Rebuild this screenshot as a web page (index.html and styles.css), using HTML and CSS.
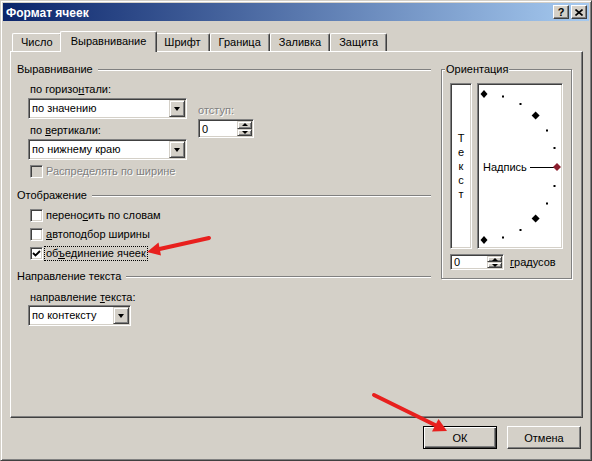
FILE: index.html
```html
<!DOCTYPE html>
<html lang="ru">
<head>
    <meta charset="UTF-8">
    <title>Формат ячеек</title>
    <link rel="stylesheet" href="styles.css">
</head>
<body>
    <div class="window">
        <div class="titlebar">
            <span class="title">Формат ячеек</span>
            <div class="caption-buttons">
                <span class="cap-btn">?</span>
                <span class="cap-btn">
                    <svg width="8" height="7" viewBox="0 0 8 7">
                        <path d="M0.5 0.5 L7.5 6.5 M7.5 0.5 L0.5 6.5" stroke="#000" stroke-width="1.6"/>
                    </svg>
                </span>
            </div>
        </div>

        <div class="content">
            <div class="tabs">
                <div class="tab">Число</div>
                <div class="tab active">Выравнивание</div>
                <div class="tab">Шрифт</div>
                <div class="tab">Граница</div>
                <div class="tab">Заливка</div>
                <div class="tab">Защита</div>
            </div>

            <div class="tab-panel">
                <div class="left-col">
                    <div class="group-title">Выравнивание</div>
                    <div class="group-body">
                        <div class="align-fields">
                            <div class="align-main">
                                <div class="field-label first">по горизо<u>н</u>тали:</div>
                                <div class="select">
                                    <span class="select-value">по значению</span>
                                    <span class="drop-btn"></span>
                                </div>
                                <div class="field-label">по <u>в</u>ертикали:</div>
                                <div class="select">
                                    <span class="select-value">по нижнему краю</span>
                                    <span class="drop-btn"></span>
                                </div>
                            </div>
                            <div class="indent">
                                <div class="field-label disabled">отступ:</div>
                                <div class="spin spin-indent">
                                    <span class="spin-value">0</span>
                                    <span class="spin-arrows">
                                        <span class="spin-btn up"></span>
                                        <span class="spin-btn down"></span>
                                    </span>
                                </div>
                            </div>
                        </div>
                        <div class="check-row disabled">
                            <span class="check-box"></span>
                            <span class="check-text">Распределять по ширине</span>
                        </div>
                    </div>

                    <div class="group-title display-title">Отображение</div>
                    <div class="group-body">
                        <div class="check-row">
                            <span class="check-box"></span>
                            <span class="check-text">перено<u>с</u>ить по словам</span>
                        </div>
                        <div class="check-row">
                            <span class="check-box"></span>
                            <span class="check-text"><u>а</u>втоподбор ширины</span>
                        </div>
                        <div class="check-row">
                            <span class="check-box">
                                <svg width="9" height="9" viewBox="0 0 9 9">
                                    <path d="M1 4 L3.5 6.5 L8 2" stroke="#000" stroke-width="1.8" fill="none"/>
                                </svg>
                            </span>
                            <span class="check-text focused">об<u>ъ</u>единение ячеек</span>
                        </div>
                    </div>

                    <div class="group-title direction-title">Направление текста</div>
                    <div class="group-body">
                        <div class="field-label direction-label">направление <u>т</u>екста:</div>
                        <div class="select select-short">
                            <span class="select-value">по контексту</span>
                            <span class="drop-btn"></span>
                        </div>
                    </div>
                </div>

                <fieldset class="orientation">
                    <legend>Ориентация</legend>
                    <div class="orient-boxes">
                        <div class="vertical-text">
                            <span>Т</span><span>е</span><span>к</span><span>с</span><span>т</span>
                        </div>
                        <div class="dial">
                            <svg width="82" height="162" viewBox="0 0 82 162">
                                <g fill="#000">
                                    <polygon points="4,4 7.5,8 4,12 0.5,8"/>
                                    <rect x="22" y="9.5" width="2" height="2"/>
                                    <rect x="39.5" y="17" width="2" height="2"/>
                                    <polygon points="55.6,25.4 59.6,29.4 55.6,33.4 51.6,29.4"/>
                                    <rect x="66" y="43.5" width="2" height="2"/>
                                    <rect x="73.5" y="61" width="2" height="2"/>
                                    <rect x="73.5" y="99" width="2" height="2"/>
                                    <rect x="66" y="116.5" width="2" height="2"/>
                                    <polygon points="55.6,128.6 59.6,132.6 55.6,136.6 51.6,132.6"/>
                                    <rect x="39.5" y="143" width="2" height="2"/>
                                    <rect x="22" y="150.5" width="2" height="2"/>
                                    <polygon points="4,150 7.5,154 4,158 0.5,154"/>
                                </g>
                                <text x="3" y="85" class="dial-label">Надпись</text>
                                <line x1="50" y1="81.5" x2="75" y2="81.5" stroke="#000" stroke-width="1"/>
                                <polygon points="77,77 81,81 77,85 73,81" fill="#8b1e2e"/>
                            </svg>
                        </div>
                    </div>
                    <div class="degrees-row">
                        <div class="spin spin-degrees">
                            <span class="spin-value">0</span>
                            <span class="spin-arrows">
                                <span class="spin-btn up"></span>
                                <span class="spin-btn down"></span>
                            </span>
                        </div>
                        <span class="degrees-label"><u>г</u>радусов</span>
                    </div>
                </fieldset>
            </div>

            <div class="buttons">
                <button class="btn default">ОК</button>
                <button class="btn">Отмена</button>
            </div>
        </div>
    </div>

    <!-- red pen marks drawn on top of the dialog -->
    <svg class="annotations" width="592" height="461" viewBox="0 0 592 461">
        <g stroke="#e8201e" fill="none" stroke-linecap="round">
            <path d="M66 49.5 Q110 51 156 47.5" stroke-width="3"/>
            <line x1="209" y1="238" x2="159.5" y2="249" stroke-width="4"/>
            <line x1="374" y1="395" x2="435" y2="425" stroke-width="4"/>
        </g>
        <g fill="#e8201e">
            <polygon points="147,252 161,255.5 158.5,242.5"/>
            <polygon points="447,431 438.5,419 432,431.5"/>
        </g>
    </svg>
</body>
</html>
```

FILE: styles.css
```css
body {
    margin: 0;
    background-color: #d4d0c8;
    color: #000;
    font-family: "Liberation Sans", Arial, sans-serif;
    font-size: 11px;
}

u {
    text-decoration: underline;
    text-underline-offset: 1px;
}

.window {
    width: 592px;
    height: 461px;
    box-sizing: border-box;
    padding: 2px;
    border: 1px solid;
    border-color: #d4d0c8 #404040 #404040 #d4d0c8;
    box-shadow: inset 1px 1px #fff, inset -1px -1px #808080;
    background-color: #d4d0c8;
    display: flex;
    flex-direction: column;
}

/* title bar */
.titlebar {
    height: 18px;
    flex: 0 0 18px;
    display: flex;
    align-items: center;
    justify-content: space-between;
    padding: 0 2px;
    background: linear-gradient(to right, #0a246a, #a6caf0);
}

.title {
    color: #fff;
    font-weight: bold;
    font-size: 12px;
    padding-left: 1px;
    padding-top: 2px;
}

.caption-buttons {
    display: flex;
    gap: 2px;
}

.cap-btn {
    width: 16px;
    height: 14px;
    box-sizing: border-box;
    border: 1px solid;
    border-color: #fff #404040 #404040 #fff;
    box-shadow: inset -1px -1px #808080;
    background-color: #d4d0c8;
    display: flex;
    align-items: center;
    justify-content: center;
    font-weight: bold;
    font-size: 11px;
    line-height: 11px;
}

/* tabs and panel */
.content {
    flex: 1;
    display: flex;
    flex-direction: column;
    padding: 10px 6px 0 7px;
}

.tabs {
    height: 20px;
    display: flex;
    align-items: flex-end;
    padding-left: 2px;
    z-index: 1;
}

.tab {
    height: 18px;
    box-sizing: border-box;
    padding: 0 8px;
    line-height: 17px;
    border: 1px solid;
    border-color: #fff #404040 transparent #fff;
    border-bottom: none;
    border-radius: 2px 2px 0 0;
    box-shadow: inset -1px 0 #808080;
    background-color: #d4d0c8;
}

.tab.active {
    height: 21px;
    margin: 0 -2px -1px;
    padding: 0 10px;
    line-height: 19px;
    z-index: 2;
}

.tab-panel {
    height: 367px;
    box-sizing: border-box;
    border: 1px solid;
    border-color: #fff #404040 #404040 #fff;
    box-shadow: inset -1px -1px #808080;
    display: flex;
    align-items: flex-start;
    padding: 11px 10px 0 6px;
}

.left-col {
    width: 415px;
}

.group-title {
    height: 13px;
    line-height: 13px;
    display: flex;
    align-items: center;
    white-space: nowrap;
}

.group-title::after {
    content: "";
    flex: 1;
    border-top: 1px solid #808080;
    border-bottom: 1px solid #fff;
    margin-left: 5px;
}

.display-title {
    margin-top: 11px;
}

.direction-title {
    margin-top: 10px;
}

.group-body {
    padding-left: 11px;
}

.field-label {
    height: 13px;
    line-height: 13px;
    padding-left: 2px;
    margin-top: 5px;
    white-space: nowrap;
}

.field-label.first {
    margin-top: 7px;
}

.direction-label {
    margin-top: 8px;
}

.disabled,
.disabled .check-text {
    color: #808080;
    text-shadow: 1px 1px 0 #fff;
}

/* drop-down lists */
.select {
    width: 159px;
    height: 21px;
    box-sizing: border-box;
    margin-top: 2px;
    border: 1px solid;
    border-color: #808080 #fff #fff #808080;
    box-shadow: inset 1px 1px #404040, inset -1px -1px #d4d0c8;
    background-color: #fff;
    padding: 1px;
    display: flex;
}

.select-short {
    width: 103px;
    margin-top: 1px;
}

.select-value {
    flex: 1;
    line-height: 17px;
    padding-left: 2px;
    white-space: nowrap;
}

.drop-btn,
.spin-btn {
    box-sizing: border-box;
    border: 1px solid;
    border-color: #d4d0c8 #404040 #404040 #d4d0c8;
    box-shadow: inset 1px 1px #fff, inset -1px -1px #808080;
    background-color: #d4d0c8;
    display: flex;
    align-items: center;
    justify-content: center;
}

.drop-btn {
    width: 16px;
}

.drop-btn::after {
    content: "";
    border-top: 4px solid #000;
    border-left: 3.5px solid transparent;
    border-right: 3.5px solid transparent;
}

.spin-btn.up::after {
    content: "";
    border-bottom: 3px solid #000;
    border-left: 3px solid transparent;
    border-right: 3px solid transparent;
}

.spin-btn.down::after {
    content: "";
    border-top: 3px solid #000;
    border-left: 3px solid transparent;
    border-right: 3px solid transparent;
}

/* indent spinner */
.align-fields {
    display: flex;
}

.indent {
    margin-left: 11px;
}

.indent .field-label {
    margin-top: 28px;
    padding-left: 0;
}

.spin {
    box-sizing: border-box;
    border: 1px solid;
    border-color: #808080 #fff #fff #808080;
    box-shadow: inset 1px 1px #404040, inset -1px -1px #d4d0c8;
    background-color: #fff;
    padding: 1px;
    display: flex;
}

.spin-indent {
    width: 56px;
    height: 19px;
    margin-top: 2px;
}

.spin-degrees {
    width: 54px;
    height: 16px;
}

.spin-value {
    flex: 1;
    padding-left: 2px;
    display: flex;
    align-items: center;
}

.spin-arrows {
    width: 15px;
    display: flex;
    flex-direction: column;
}

.spin-btn {
    flex: 1;
}

/* check boxes */
.check-row {
    height: 13px;
    display: flex;
    align-items: center;
    padding-left: 2px;
    margin-top: 6px;
    white-space: nowrap;
}

.group-body > .check-row:first-child {
    margin-top: 7px;
}

.check-row.disabled {
    margin-top: 5px;
}

.check-box {
    width: 13px;
    height: 13px;
    box-sizing: border-box;
    border: 1px solid;
    border-color: #808080 #fff #fff #808080;
    box-shadow: inset 1px 1px #404040, inset -1px -1px #d4d0c8;
    background-color: #fff;
    display: flex;
    align-items: center;
    justify-content: center;
}

.disabled .check-box {
    background-color: #d4d0c8;
}

.check-text {
    margin-left: 1px;
    padding: 0 1px;
    line-height: 13px;
    border: 1px dotted transparent;
}

.check-text.focused {
    border-color: #000;
}

/* orientation box */
.orientation {
    width: 131px;
    box-sizing: border-box;
    margin: 0 0 0 10px;
    padding: 7px 8px 8px 8px;
    border: 1px solid #808080;
    box-shadow: inset 1px 1px #fff, 1px 1px #fff;
}

.orientation legend {
    margin-left: -5px;
    padding: 0 1px;
    line-height: 13px;
    background-color: #d4d0c8;
}

.orient-boxes {
    display: flex;
    gap: 5px;
}

.vertical-text,
.dial {
    height: 166px;
    box-sizing: border-box;
    border: 1px solid;
    border-color: #808080 #fff #fff #808080;
    box-shadow: inset 1px 1px #404040, inset -1px -1px #d4d0c8;
    background-color: #fff;
}

.vertical-text {
    width: 22px;
    display: flex;
    flex-direction: column;
    align-items: center;
    justify-content: center;
    line-height: 14px;
}

.dial {
    width: 86px;
    padding: 2px;
}

.dial svg {
    display: block;
}

.dial-label {
    font-family: "Liberation Sans", Arial, sans-serif;
    font-size: 11px;
}

.degrees-row {
    display: flex;
    align-items: center;
    margin-top: 5px;
}

.degrees-label {
    margin-left: 6px;
}

/* dialog buttons */
.buttons {
    display: flex;
    justify-content: flex-end;
    gap: 10px;
    margin-top: 8px;
    padding-right: 2px;
}

.btn {
    width: 74px;
    height: 23px;
    box-sizing: border-box;
    padding: 0;
    font-family: "Liberation Sans", Arial, sans-serif;
    font-size: 11px;
    color: #000;
    background-color: #d4d0c8;
    border: 1px solid;
    border-color: #fff #404040 #404040 #fff;
    box-shadow: inset -1px -1px #808080;
}

.btn.default {
    border-color: #000;
    box-shadow: inset 1px 1px #fff, inset -1px -1px #404040, inset -2px -2px #808080;
}

.annotations {
    position: absolute;
    top: 0;
    left: 0;
    pointer-events: none;
}
```
